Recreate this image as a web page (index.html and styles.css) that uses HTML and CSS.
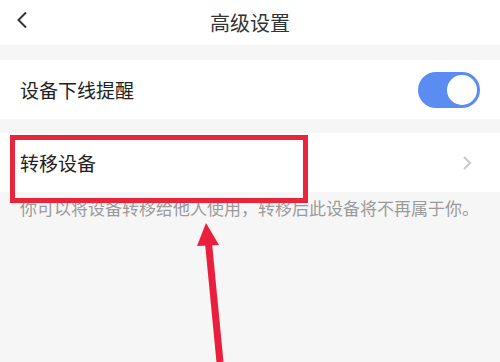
FILE: index.html
```html
<!DOCTYPE html>
<html lang="zh">
  <head>
    <meta charset="UTF-8" />
    <meta name="viewport" content="width=device-width, initial-scale=1.0" />
    <title>高级设置</title>
    <link rel="stylesheet" href="styles.css">
  </head>
  <body>
    <!-- 헤더 -->
    <div class="header">
      <svg class="back" width="12" height="18" viewBox="0 0 12 18">
        <path d="M10 1.5 L2.5 9 L10 16.5" fill="none" stroke="#333" stroke-width="2" />
      </svg>
      <div class="title">高级设置</div>
    </div>

    <div class="row row-first">
      <div class="label">设备下线提醒</div>
      <div class="switch"><div class="knob"></div></div>
    </div>

    <div class="row row-second">
      <div class="label">转移设备</div>
      <svg class="arrow-right" width="10" height="16" viewBox="0 0 10 16">
        <path d="M2 2 L8 8 L2 14" fill="none" stroke="#c8c8c8" stroke-width="2" />
      </svg>
    </div>

    <div class="desc">你可以将设备转移给他人使用，转移后此设备将不再属于你。</div>

    <!-- 강조 표시 -->
    <div class="mark"></div>
    <svg class="pointer" width="500" height="362" viewBox="0 0 500 362">
      <line x1="208.5" y1="243" x2="220" y2="362" stroke="#ea1f3d" stroke-width="7" />
      <polygon points="206,223 197,246 219,245" fill="#ea1f3d" />
    </svg>
  </body>
</html>
```

FILE: styles.css
```css
body {
  margin: 0;
  background-color: #f6f6f6;
  font-family: "Noto Sans CJK SC", "Noto Sans", sans-serif;
  color: #333;
  position: relative;
  height: 362px;
  overflow: hidden;
}
.header {
  height: 45px;
  background-color: #fff;
  display: flex;
  align-items: center;
  justify-content: center;
  position: relative;
}
.back {
  position: absolute;
  left: 16px;
  top: 11px;
}
.title {
  font-size: 20px;
  color: #333;
}
.row {
  background-color: #fff;
  display: flex;
  align-items: center;
  justify-content: space-between;
  padding: 0 20px;
}
.row-first {
  margin-top: 15px;
  height: 59px;
}
.row-second {
  margin-top: 14px;
  height: 59px;
  padding-right: 28px;
}
.label {
  font-size: 19px;
  color: #222;
}
.switch {
  width: 62px;
  height: 36px;
  border-radius: 18px;
  background-color: #5b8cf2;
  position: relative;
}
.knob {
  width: 30px;
  height: 30px;
  border-radius: 50%;
  background-color: #fff;
  position: absolute;
  right: 3px;
  top: 3px;
}
.desc {
  font-size: 17px;
  color: #9a9a9a;
  padding: 3px 0 0 20px;
  line-height: 26px;
}
.mark {
  position: absolute;
  left: 10px;
  top: 135px;
  width: 288px;
  height: 58px;
  border: 5px solid #e8253b;
}
.pointer {
  position: absolute;
  left: 0;
  top: 0;
}
```
